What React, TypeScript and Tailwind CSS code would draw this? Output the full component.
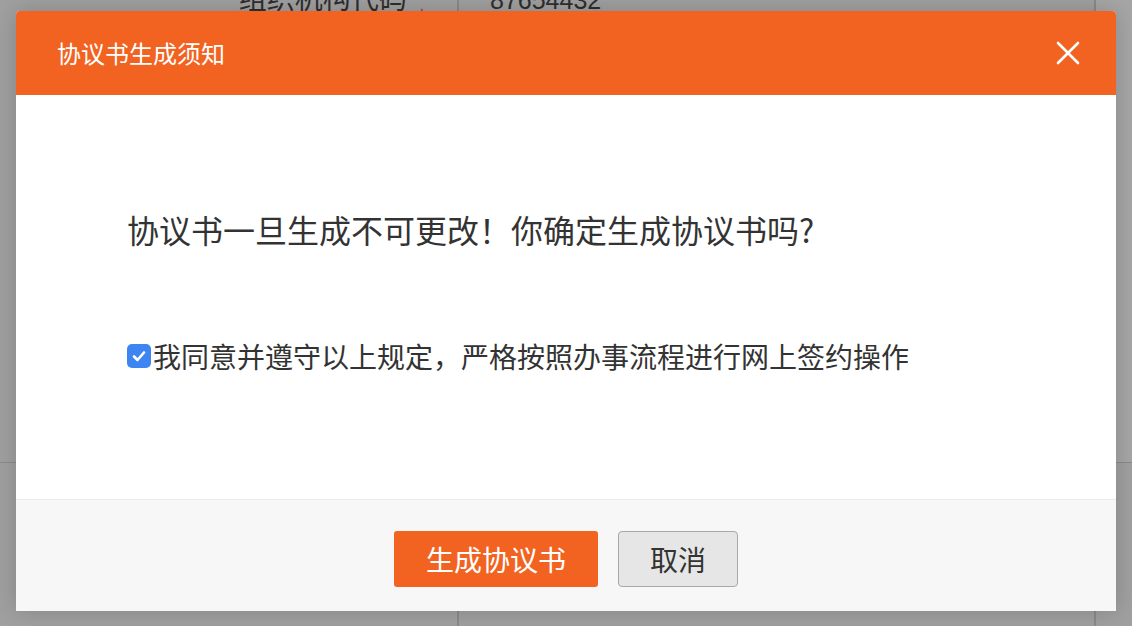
const FONT = "font-['Noto_Sans_CJK_SC','Noto_Sans',sans-serif]";

function CloseIcon() {
  return (
    <svg width="24" height="24" viewBox="0 0 24 24" fill="none" stroke="white" strokeWidth="2.6" strokeLinecap="round">
      <path d="M2 2 L22 22 M22 2 L2 22" />
    </svg>
  );
}

function CheckedBox() {
  return (
    <span className="w-[24px] h-[24px] rounded-[5px] bg-[#3d85f0] flex items-center justify-center shrink-0">
      <svg width="16" height="16" viewBox="0 0 16 16" fill="none" stroke="white" strokeWidth="2.6" strokeLinecap="round" strokeLinejoin="round">
        <path d="M3 8.5 L6.5 12 L13 4.5" />
      </svg>
    </span>
  );
}

export default function App() {
  return (
    <div className={`relative w-[1132px] h-[626px] overflow-hidden bg-[#a0a0a0] ${FONT}`}>
      {/* page behind the overlay */}
      <div className="flex flex-col -mt-[26px]">
        <div className="flex h-[489px] border-b border-[#8a8a8a]">
          <div className="w-[459px] border-r-2 border-[#8a8a8a] flex justify-end pr-[30px] pt-[7px]">
            <span className="text-[28px] leading-[32px] text-[#2e2e2e]">组织机构代码</span>
            <span className="text-[#b83a2c] text-[22px] leading-[22px] ml-[10px] mt-[24px]">*</span>
          </div>
          <div className="w-[637px] border-r-2 border-[#8a8a8a] pl-[31px] pt-[10px]">
            <span className="text-[25px] leading-[32px] text-[#2e2e2e] font-['Liberation_Sans',sans-serif]">87654432</span>
          </div>
          <div className="flex-1 bg-[#a6a6a6]" />
        </div>
        <div className="flex h-[200px]">
          <div className="w-[459px] border-r-2 border-[#8a8a8a]" />
          <div className="w-[637px] border-r-2 border-[#8a8a8a]" />
          <div className="flex-1" />
        </div>
      </div>

      {/* dialog */}
      <div className="absolute left-[16px] top-[11px] w-[1100px] h-[600px] flex flex-col bg-white rounded-t-[4px] shadow-[0_0_24px_rgba(0,0,0,0.18)]">
        <div className="h-[84px] bg-[#f26322] rounded-t-[4px] flex items-center justify-between pl-[41px] pr-[36px]">
          <span className="text-[24px] leading-[32px] text-white">协议书生成须知</span>
          <CloseIcon />
        </div>
        <div className="h-[404px] flex flex-col pl-[111px] pt-[118px] text-[#333333]">
          <p className="text-[32px] leading-[32px]">协议书一旦生成不可更改！你确定生成协议书吗?</p>
          <label className="flex items-center mt-[97px] text-[28px] leading-[28px]">
            <CheckedBox />
            <span className="ml-[2px]">我同意并遵守以上规定，严格按照办事流程进行网上签约操作</span>
          </label>
        </div>
        <div className="flex-1 bg-[#f7f7f7] border-t border-[#ebebeb] flex justify-center gap-[20px] pt-[31px]">
          <button className="w-[204px] h-[56px] rounded-[3px] bg-[#f26322] text-white text-[28px] leading-[28px]">
            生成协议书
          </button>
          <button className="w-[120px] h-[56px] rounded-[4px] bg-[#e6e6e6] border border-[#a8a8a8] text-[#333333] text-[28px] leading-[28px]">
            取消
          </button>
        </div>
      </div>
    </div>
  );
}
